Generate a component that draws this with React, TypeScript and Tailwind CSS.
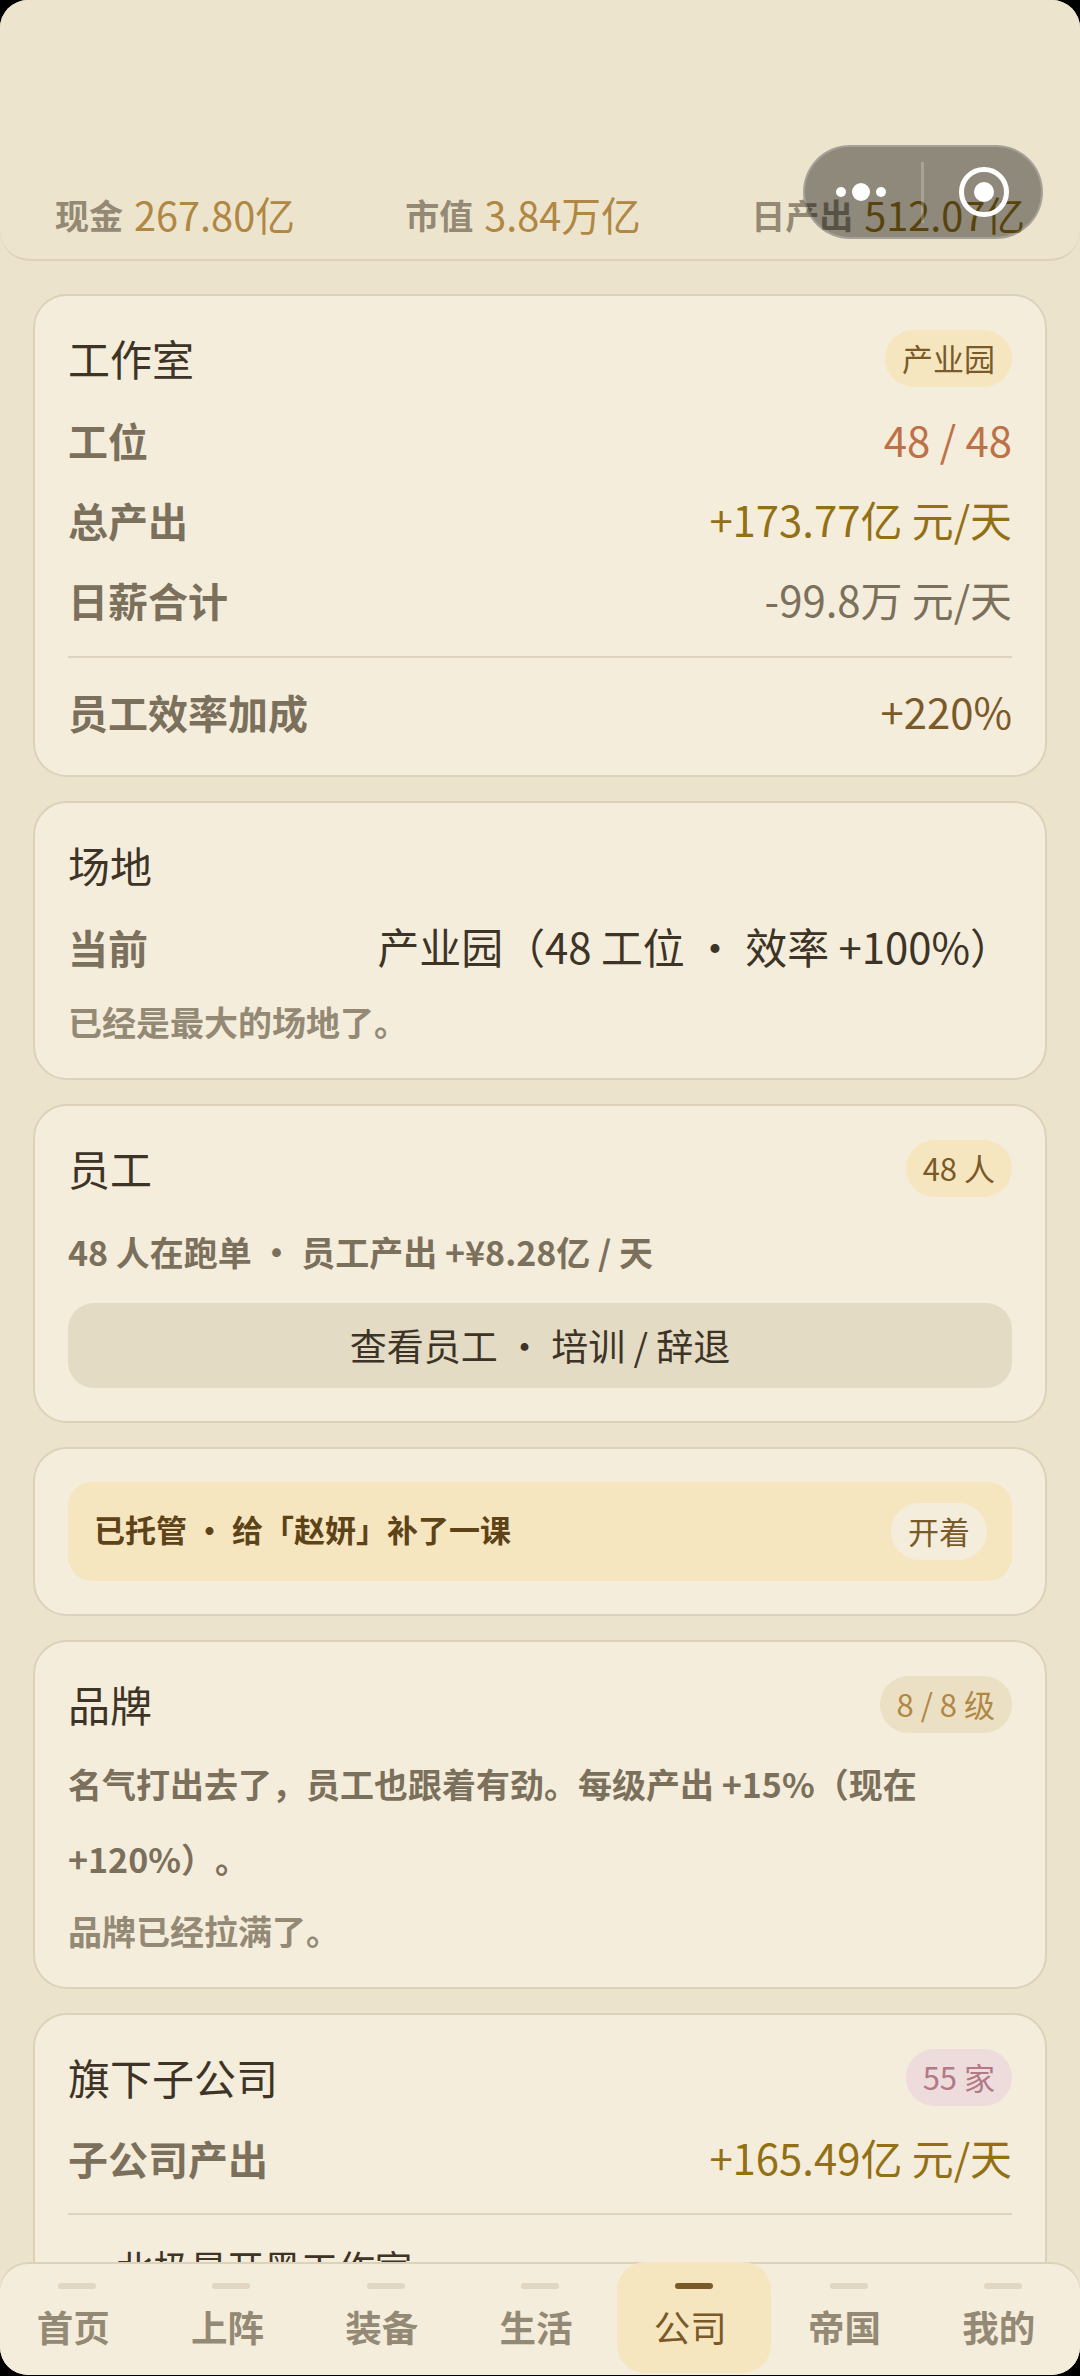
import React from "react";

type Tone = "gold" | "muted" | "pink" | "plain";

const badgeTones: Record<Tone, string> = {
  gold: "bg-[#f6e6c0] text-[#7a5a28]",
  muted: "bg-[#ece0c4] text-[#b08743]",
  pink: "bg-[#eedbdc] text-[#b17a86]",
  plain: "bg-[#f5eddb] text-[#7a5a28]",
};

const tabs = ["首页", "上阵", "装备", "生活", "公司", "帝国", "我的"];

function Badge({ tone, children }: { tone: Tone; children: React.ReactNode }) {
  return (
    <span
      className={`flex h-[57px] items-center rounded-full px-[17px] text-[31px] ${badgeTones[tone]}`}
    >
      {children}
    </span>
  );
}

function Card({ className = "", children }: { className?: string; children: React.ReactNode }) {
  return (
    <section
      className={`shrink-0 rounded-[34px] border-2 border-[#ddd1b9] bg-[#f5eddb] px-[33px] py-[34px] ${className}`}
    >
      {children}
    </section>
  );
}

function CardTitle({ title, children }: { title: string; children?: React.ReactNode }) {
  return (
    <div className="flex h-[57px] items-center justify-between">
      <h2 className="pb-0.5 text-[42px] text-[#3d3427]">{title}</h2>
      {children}
    </div>
  );
}

function Row({ label, value, color }: { label: string; value: string; color: string }) {
  return (
    <div className="flex h-[60px] items-center justify-between whitespace-nowrap">
      <span className="text-[40px] font-bold text-[#7b705c]">{label}</span>
      <span className={`pb-px text-[41.9px] ${color}`}>{value}</span>
    </div>
  );
}

function Stat({ label, value, color }: { label: string; value: string; color: string }) {
  return (
    <div className="flex items-center gap-[11px] whitespace-nowrap">
      <span className="text-[34px] font-bold text-[#938975]">{label}</span>
      <span className={`text-[39.7px] ${color}`}>{value}</span>
    </div>
  );
}

function Capsule() {
  return (
    <div className="absolute top-[145px] right-[37px] h-[94px] w-[240px] rounded-full border-2 border-white/20 bg-black/40">
      <svg className="-m-0.5" width="240" height="94" viewBox="0 0 240 94" fill="#fff">
        <circle cx="38" cy="47" r="5" />
        <circle cx="58" cy="47" r="9" />
        <circle cx="78" cy="47" r="5" />
        <rect x="118" y="17" width="3" height="61" opacity="0.22" />
        <circle cx="181" cy="47" r="22.5" fill="none" stroke="#fff" strokeWidth="5" />
        <circle cx="181" cy="47" r="10" />
      </svg>
    </div>
  );
}

export default function App() {
  return (
    <div className="h-[2376px] w-[1080px] bg-black pb-px font-['Noto_Sans_CJK_SC',sans-serif] [text-spacing-trim:space-all]">
      <div className="relative flex h-full flex-col overflow-hidden rounded-[28px] bg-[#ebe3cc]">
        <header className="flex h-[261px] shrink-0 items-end justify-between rounded-b-[30px] border-b-2 border-[#ddd1b9] bg-[#ede4ce] px-[55px] pb-[15px]">
          <Stat label="现金" value="267.80亿" color="text-[#b08743]" />
          <Stat label="市值" value="3.84万亿" color="text-[#b08743]" />
          <Stat label="日产出" value="512.07亿" color="text-[#937014]" />
        </header>

        <main className="flex min-h-0 flex-1 flex-col gap-6 overflow-hidden px-[33px] pt-[33px]">
          <Card className="h-[483px]">
            <CardTitle title="工作室">
              <Badge tone="gold">产业园</Badge>
            </CardTitle>
            <div className="mt-[23px] flex flex-col gap-5">
              <Row label="工位" value="48 / 48" color="text-[#bd7148]" />
              <Row label="总产出" value="+173.77亿 元/天" color="text-[#937014]" />
              <Row label="日薪合计" value="-99.8万 元/天" color="text-[#7b705c]" />
            </div>
            <div className="mt-[26px] mb-6 h-0.5 bg-[#ddd3be]" />
            <Row label="员工效率加成" value="+220%" color="text-[#7a5a28]" />
          </Card>

          <Card className="h-[279px]">
            <CardTitle title="场地" />
            <div className="mt-[23px]">
              <Row label="当前" value="产业园（48 工位 · 效率 +100%）" color="text-[#3d3427]" />
            </div>
            <p className="mt-[22px] text-[34px] leading-[46px] font-bold text-[#938975]">
              已经是最大的场地了。
            </p>
          </Card>

          <Card className="h-[319px]">
            <CardTitle title="员工">
              <Badge tone="gold">48 人</Badge>
            </CardTitle>
            <p className="mt-[17px] text-[34px] leading-[75px] font-bold text-[#7b705c]">
              48 人在跑单 · 员工产出 +¥8.28亿 / 天
            </p>
            <button className="mt-[14px] flex h-[85px] w-full items-center justify-center rounded-[26px] bg-[#e3dbc4] text-[37px] text-[#3d3427]">
              查看员工 · 培训 / 辞退
            </button>
          </Card>

          <Card className="h-[169px]">
            <div className="-mt-px flex h-[99px] items-center justify-between rounded-[24px] bg-[#f6e6c0] pr-[25px] pl-[26px]">
              <span className="pb-1 text-[31px] font-bold text-[#5e4319]">
                已托管 · 给「赵妍」补了一课
              </span>
              <Badge tone="plain">开着</Badge>
            </div>
          </Card>

          <Card className="h-[349px]">
            <CardTitle title="品牌">
              <Badge tone="muted">8 / 8 级</Badge>
            </CardTitle>
            <p className="mt-[13px] text-[34px] leading-[75px] font-bold text-[#7b705c]">
              名气打出去了，员工也跟着有劲。每级产出 +15%（现在 +120%）。
            </p>
            <p className="mt-3 text-[34px] leading-[46px] font-bold text-[#938975]">
              品牌已经拉满了。
            </p>
          </Card>

          <Card className="h-[480px]">
            <CardTitle title="旗下子公司">
              <Badge tone="pink">55 家</Badge>
            </CardTitle>
            <div className="mt-[22px]">
              <Row label="子公司产出" value="+165.49亿 元/天" color="text-[#937014]" />
            </div>
            <div className="mt-[25px] mb-6 h-0.5 bg-[#ddd3be]" />
            <p className="pl-12 text-[37px] leading-[56px] text-[#3d3427]">北极星开黑工作室</p>
          </Card>
        </main>

        <nav className="grid h-[113px] shrink-0 grid-cols-7 rounded-t-[28px] bg-[#f5eddb] shadow-[inset_0_2px_0_#ddd1b9]">
          {tabs.map((tab) => {
            const active = tab === "公司";
            return (
              <div
                key={tab}
                className={`flex h-[111px] flex-col items-center rounded-[28px] pt-[21px] ${
                  active ? "bg-[#f6e6c0]" : ""
                }`}
              >
                <span
                  className={`h-1.5 w-[38px] rounded-[3px] ${active ? "bg-[#7a5a28]" : "bg-[#e0d6c1]"}`}
                />
                <span
                  className={`mt-[10px] pr-2 text-[36.5px] leading-[56px] ${
                    active ? "text-[#7a5a28]" : "font-bold text-[#938975]"
                  }`}
                >
                  {tab}
                </span>
              </div>
            );
          })}
        </nav>

        <Capsule />
      </div>
    </div>
  );
}
